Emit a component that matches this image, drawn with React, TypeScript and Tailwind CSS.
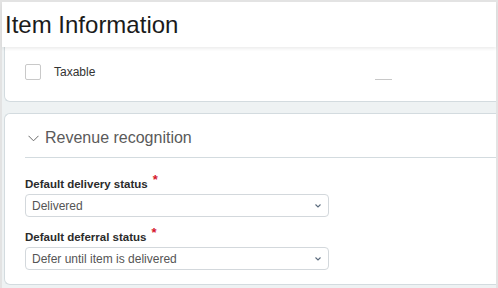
export default function App() {
  return (
    <div className="w-[498px] h-[288px] overflow-hidden bg-[#e3e3e3] pt-[2px] pl-[2px] pr-[2px] font-['Liberation_Sans',Arial,sans-serif]">
      <div className="h-full bg-[#eef2f3] flex flex-col">
        <header className="relative z-10 h-[45px] bg-white flex items-center pl-[3px] shadow-[0_2px_3px_rgba(0,0,0,0.07)]">
          <h1 className="text-[24px] leading-none text-[#1b1b1b]">Item Information</h1>
        </header>

        <div className="pl-[2px] flex flex-col gap-[11px]">
          {/* Taxable card */}
          <div className="h-[55px] bg-white border-l border-b border-[#d3dbdf] rounded-bl-[6px] pl-[20px] pt-[17px] flex items-start">
            <span className="w-4 h-4 border border-[#c9c9c9] rounded-[2px] bg-white shrink-0" />
            <span className="ml-[13px] w-[321px] text-[12px] leading-4 text-[#333]">Taxable</span>
            <span className="mt-[15px] w-[17px] h-px bg-[#c8c8c8]" />
          </div>

          {/* Revenue recognition card */}
          <div className="h-[172px] bg-white border-l border-t border-b border-[#d3dbdf] rounded-l-[6px] pl-[20px]">
            <div className="pt-[14px] pb-[9px] border-b border-[#d3dbdf] flex items-center">
              <svg width="11" height="7" viewBox="0 0 11 7" className="ml-[3px] mr-[6px]">
                <polyline points="0.5,0.8 5.5,5.8 10.5,0.8" fill="none" stroke="#6a6a6a" strokeWidth="1" />
              </svg>
              <span className="text-[16px] leading-5 text-[#5a5a5a]">Revenue recognition</span>
            </div>

            <Field label="Default delivery status" value="Delivered" className="mt-[18px]" />
            <Field label="Default deferral status" value="Defer until item is delivered" className="mt-[12px]" />
          </div>
        </div>
      </div>
    </div>
  );
}

function Field({ label, value, className }: { label: string; value: string; className?: string }) {
  return (
    <div className={className}>
      <div className="text-[11.5px] leading-4 font-bold text-[#2b2b2b] flex items-start">
        {label}
        <span className="ml-[5px] text-[13px] leading-3 text-[#d5162d] relative top-[-2px]">*</span>
      </div>
      <div className="mt-[2px] w-[304px] h-[23px] border border-[#d3d8dc] rounded-[4px] flex items-center justify-between pl-[6px] pr-[7px]">
        <span className="text-[12px] text-[#555]">{value}</span>
        <svg width="6" height="4" viewBox="0 0 6 4">
          <polyline points="0.5,0.5 3,3 5.5,0.5" fill="none" stroke="#5b6b7d" strokeWidth="1.1" />
        </svg>
      </div>
    </div>
  );
}
